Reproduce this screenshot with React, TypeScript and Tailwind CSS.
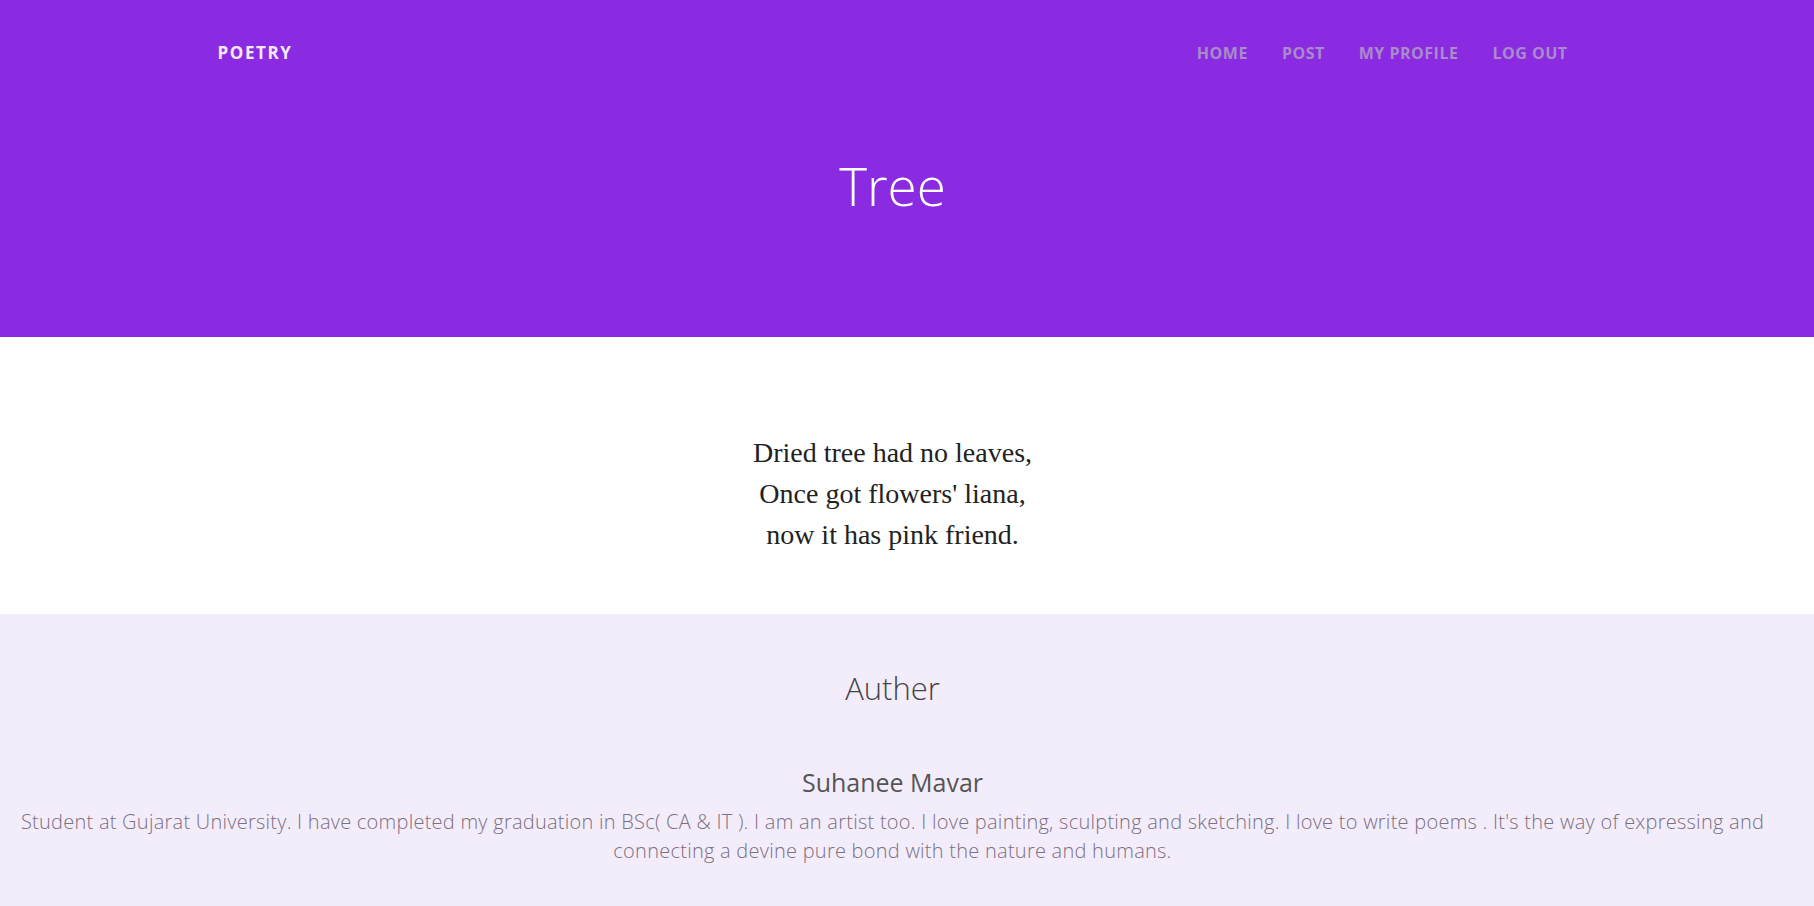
export default function App() {
  const sans = { fontFamily: "'Open Sans', 'Noto Sans', sans-serif" };
  return (
    <main className="min-h-[906px] bg-[#f3edfb]" style={sans}>
      {/* Header */}
      <header className="h-[337px] bg-[#8a2be2]">
        <div className="pr-[29px]">
          <nav className="mx-auto flex h-[106px] w-[1350px] items-center justify-between">
            <a className="text-[17px] font-bold tracking-[1.6px] text-[#f5e9ff]">POETRY</a>
            <ul className="flex items-center gap-[34px] text-[16px] font-bold tracking-[0.5px] text-[#a98bc9]">
              <li>HOME</li>
              <li>POST</li>
              <li>MY PROFILE</li>
              <li>LOG OUT</li>
            </ul>
          </nav>
          <h1 className="mt-[53px] text-center text-[53px] font-light leading-none text-white">Tree</h1>
        </div>
      </header>

      {/* Poem */}
      <section className="h-[277px] bg-white pr-[29px]">
        <div
          className="flex h-full flex-col items-center justify-center pt-[36px] text-center text-[28px] leading-[41px] text-[#222]"
          style={{ fontFamily: "'Liberation Serif', 'Times New Roman', serif" }}
        >
          <p>Dried tree had no leaves,</p>
          <p>Once got flowers' liana,</p>
          <p>now it has pink friend.</p>
        </div>
      </section>

      {/* Author */}
      <section className="pr-[29px] pt-[54px] text-center">
        <h2 className="text-[31px] font-light leading-[40px] text-[#444]">Auther</h2>
        <h3 className="mt-[58px] text-[25px] font-normal leading-[32px] text-[#555]">Suhanee Mavar</h3>
        <p className="mx-auto mt-[9px] px-[17px] text-[20px] font-light leading-[29px] tracking-[0.25px] text-[#7b7080]">
          Student at Gujarat University. I have completed my graduation in BSc( CA &amp; IT ). I am an artist too. I love
          painting, sculpting and sketching. I love to write poems . It's the way of expressing and connecting a devine pure
          bond with the nature and humans.
        </p>
      </section>
    </main>
  );
}
